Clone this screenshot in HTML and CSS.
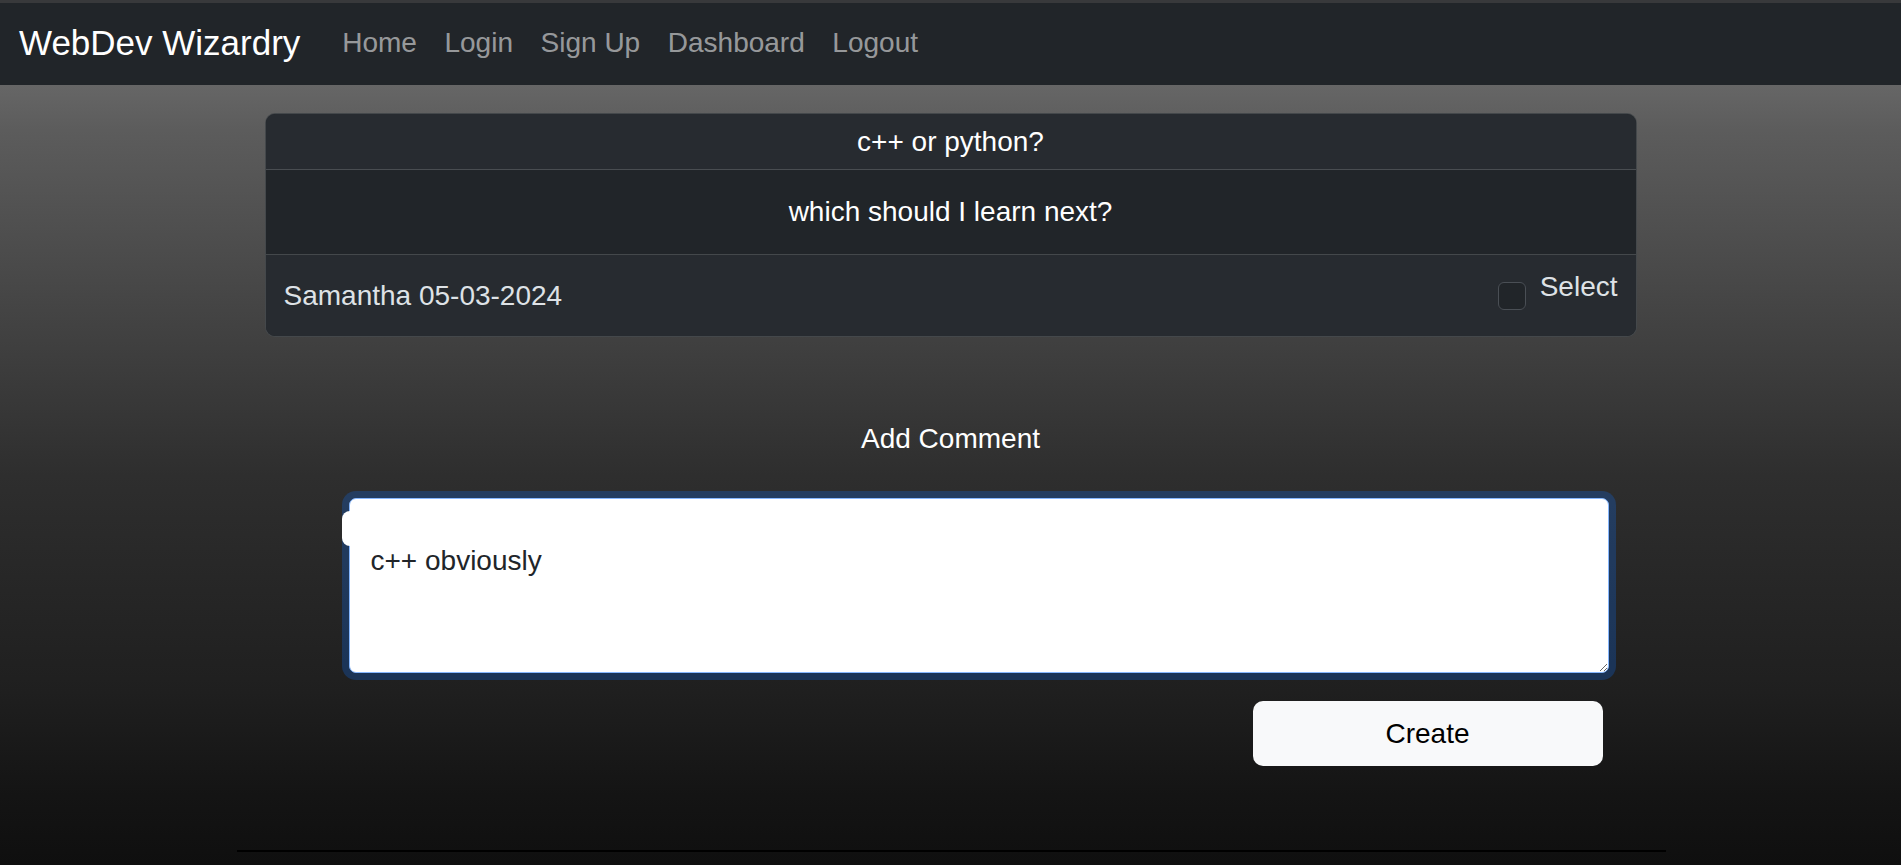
FILE: index.html
```html
<!DOCTYPE html>
<html lang="en">
<head>
<meta charset="utf-8">
<title>WebDev Wizardry</title>
<link rel="stylesheet" href="styles.css">
</head>
<body>
<nav class="navbar">
  <a class="brand" href="#">WebDev Wizardry</a>
  <ul class="nav-links">
    <li><a href="#">Home</a></li>
    <li><a href="#">Login</a></li>
    <li><a href="#">Sign Up</a></li>
    <li><a href="#">Dashboard</a></li>
    <li><a href="#">Logout</a></li>
  </ul>
</nav>
<main class="main">
  <section class="card">
    <div class="card-header">c++ or python?</div>
    <div class="card-body">which should I learn next?</div>
    <div class="card-footer">
      <span class="meta">Samantha 05-03-2024</span>
      <label class="form-check">
        <span class="check-box"></span>
        <span class="check-label">Select</span>
      </label>
    </div>
  </section>
  <h2 class="comment-title">Add Comment</h2>
  <form class="comment-form">
    <div class="field">
      <textarea class="comment-input">c++ obviously</textarea>
      <span class="field-tab"></span>
    </div>
    <div class="actions">
      <button type="button" class="btn-create">Create</button>
    </div>
  </form>
  <div class="page-rule"></div>
</main>
</body>
</html>
```

FILE: styles.css
```css
* { box-sizing: border-box; }

html, body {
  margin: 0;
  padding: 0;
}

body {
  min-height: 100vh;
  font-family: "Liberation Sans", Arial, Helvetica, sans-serif;
  background: linear-gradient(to bottom, #727272 0px, #666666 85px, #5c5c5c 130px, #2e2e2e 476px, #1f1f1f 692px, #141414 796px, #0f0f0f 865px);
  background-repeat: no-repeat;
  background-color: #0f0f0f;
}

.navbar {
  display: flex;
  align-items: center;
  height: 85px;
  border-top: 3px solid #38393b;
  background: #212529;
  padding: 0 0 3px 19px;
}

.brand {
  color: #ffffff;
  text-decoration: none;
  font-size: 35px;
  line-height: 1.2;
  margin-right: 28px;
}

.nav-links {
  display: flex;
  list-style: none;
  margin: 0;
  padding: 0;
}

.nav-links a {
  display: block;
  padding: 0 13.8px;
  color: rgba(255, 255, 255, 0.55);
  text-decoration: none;
  font-size: 28px;
  line-height: 1.2;
}

.main {
  width: 1372px;
  margin: 0 auto;
  padding-top: 28px;
}

.card {
  border: 1px solid rgba(255, 255, 255, 0.16);
  border-radius: 10px;
  background: #212529;
  overflow: hidden;
  color: #dee2e6;
  font-size: 28px;
}

.card-header {
  height: 56px;
  display: flex;
  align-items: center;
  justify-content: center;
  background: #272b30;
  border-bottom: 1px solid rgba(255, 255, 255, 0.16);
  color: #ffffff;
}

.card-body {
  height: 85px;
  display: flex;
  align-items: center;
  justify-content: center;
  border-bottom: 1px solid rgba(255, 255, 255, 0.16);
  color: #ffffff;
}

.card-footer {
  height: 81px;
  display: flex;
  align-items: center;
  justify-content: space-between;
  padding: 0 18px;
  background: #272b30;
}

.meta {
  line-height: 1.2;
}

.form-check {
  display: flex;
  align-items: flex-start;
  gap: 14px;
  margin-bottom: 16px;
}

.check-box {
  width: 28px;
  height: 28px;
  margin-top: 16px;
  border: 1px solid #4a4f55;
  border-radius: 6px;
  background: #212529;
}

.check-label {
  line-height: 42px;
  color: #dee2e6;
}

.comment-title {
  margin: 81px 0 0;
  text-align: center;
  font-weight: normal;
  font-size: 28px;
  line-height: 42px;
  color: #ffffff;
}

.comment-form {
  margin-top: 38px;
  padding: 0 28px 0 84px;
}

.field {
  position: relative;
}

.comment-input {
  display: block;
  width: 100%;
  height: 175px;
  margin: 0;
  padding: 41px 21px;
  font-family: "Liberation Sans", Arial, Helvetica, sans-serif;
  font-size: 28px;
  line-height: 1.5;
  color: #212529;
  background: #ffffff;
  border: 1px solid #86b7fe;
  border-radius: 7px;
  outline: none;
  box-shadow: 0 0 0 7px rgba(13, 110, 253, 0.25);
  resize: vertical;
}

.field-tab {
  position: absolute;
  left: -7px;
  top: 13px;
  width: 22px;
  height: 35px;
  background: #ffffff;
  border-radius: 8px;
}

.actions {
  display: flex;
  justify-content: flex-end;
  margin-top: 28px;
}

.btn-create {
  width: 350px;
  height: 65px;
  margin-right: 6px;
  border: none;
  border-radius: 10px;
  background: #f8f9fa;
  color: #000000;
  font-family: "Liberation Sans", Arial, Helvetica, sans-serif;
  font-size: 28px;
  cursor: pointer;
}

.page-rule {
  width: 1429px;
  margin: 84px 0 0 -28px;
  border-top: 2px solid #000000;
}
```
